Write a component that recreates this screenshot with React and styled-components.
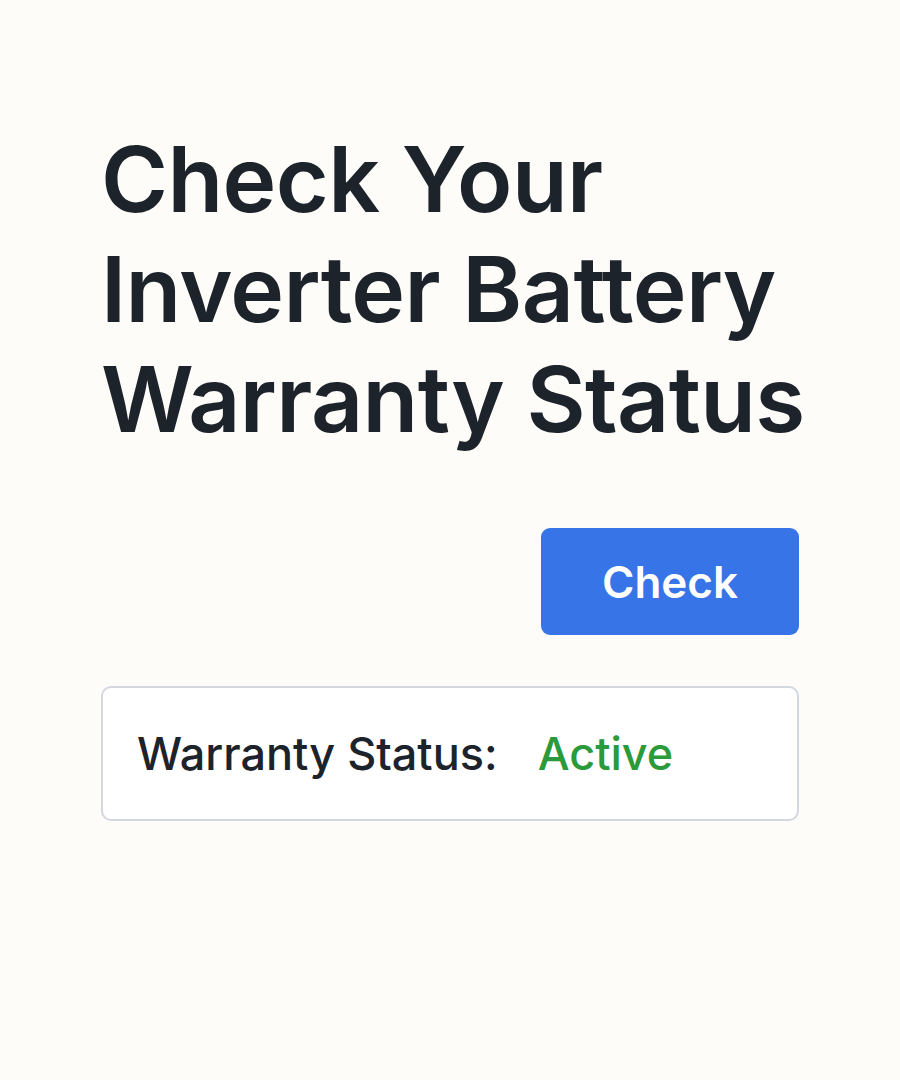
import React from "react"
import styled, { createGlobalStyle } from "styled-components"

const GlobalStyle = createGlobalStyle`
  html, body {
    margin: 0;
    padding: 0;
    background: #fdfcf9;
  }
  body {
    font-family: Inter, "Noto Sans", "Liberation Sans", sans-serif;
    color: #1d232b;
  }
`

const Page = styled.main`
  min-height: 1080px;
  padding: 124px 101px 0 101px;
  box-sizing: border-box;
  display: flex;
  flex-direction: column;
`

const Title = styled.h1`
  margin: 0;
  font-size: 91px;
  line-height: 110px;
  font-weight: 600;
  letter-spacing: -0.6px;
  white-space: nowrap;
  color: #1d232b;
`

const Actions = styled.div`
  display: flex;
  justify-content: flex-end;
  margin-top: 74px;
`

const CheckButton = styled.button`
  width: 258px;
  height: 107px;
  border: none;
  border-radius: 9px;
  background: #3674e8;
  color: #fff;
  font-family: inherit;
  font-size: 44px;
  font-weight: 600;
  cursor: pointer;
`

const StatusCard = styled.section`
  margin-top: 51px;
  height: 135px;
  box-sizing: border-box;
  border: 2px solid #d3d7e0;
  border-radius: 10px;
  background: #fff;
  display: flex;
  align-items: center;
  padding: 0 34px;
  gap: 40px;
  font-size: 45px;
  font-weight: 500;
`

const Label = styled.span`
  color: #1d232b;
`

const Value = styled.span`
  color: ${(p) => (p.$active ? "#2a9a3b" : "#c0392b")};
`

export default function App() {
  return (
    <>
      <GlobalStyle />
      <Page>
        <Title>
          Check Your
          <br />
          Inverter Battery
          <br />
          Warranty Status
        </Title>
        <Actions>
          <CheckButton>Check</CheckButton>
        </Actions>
        <StatusCard>
          <Label>Warranty Status:</Label>
          <Value $active>Active</Value>
        </StatusCard>
      </Page>
    </>
  )
}
